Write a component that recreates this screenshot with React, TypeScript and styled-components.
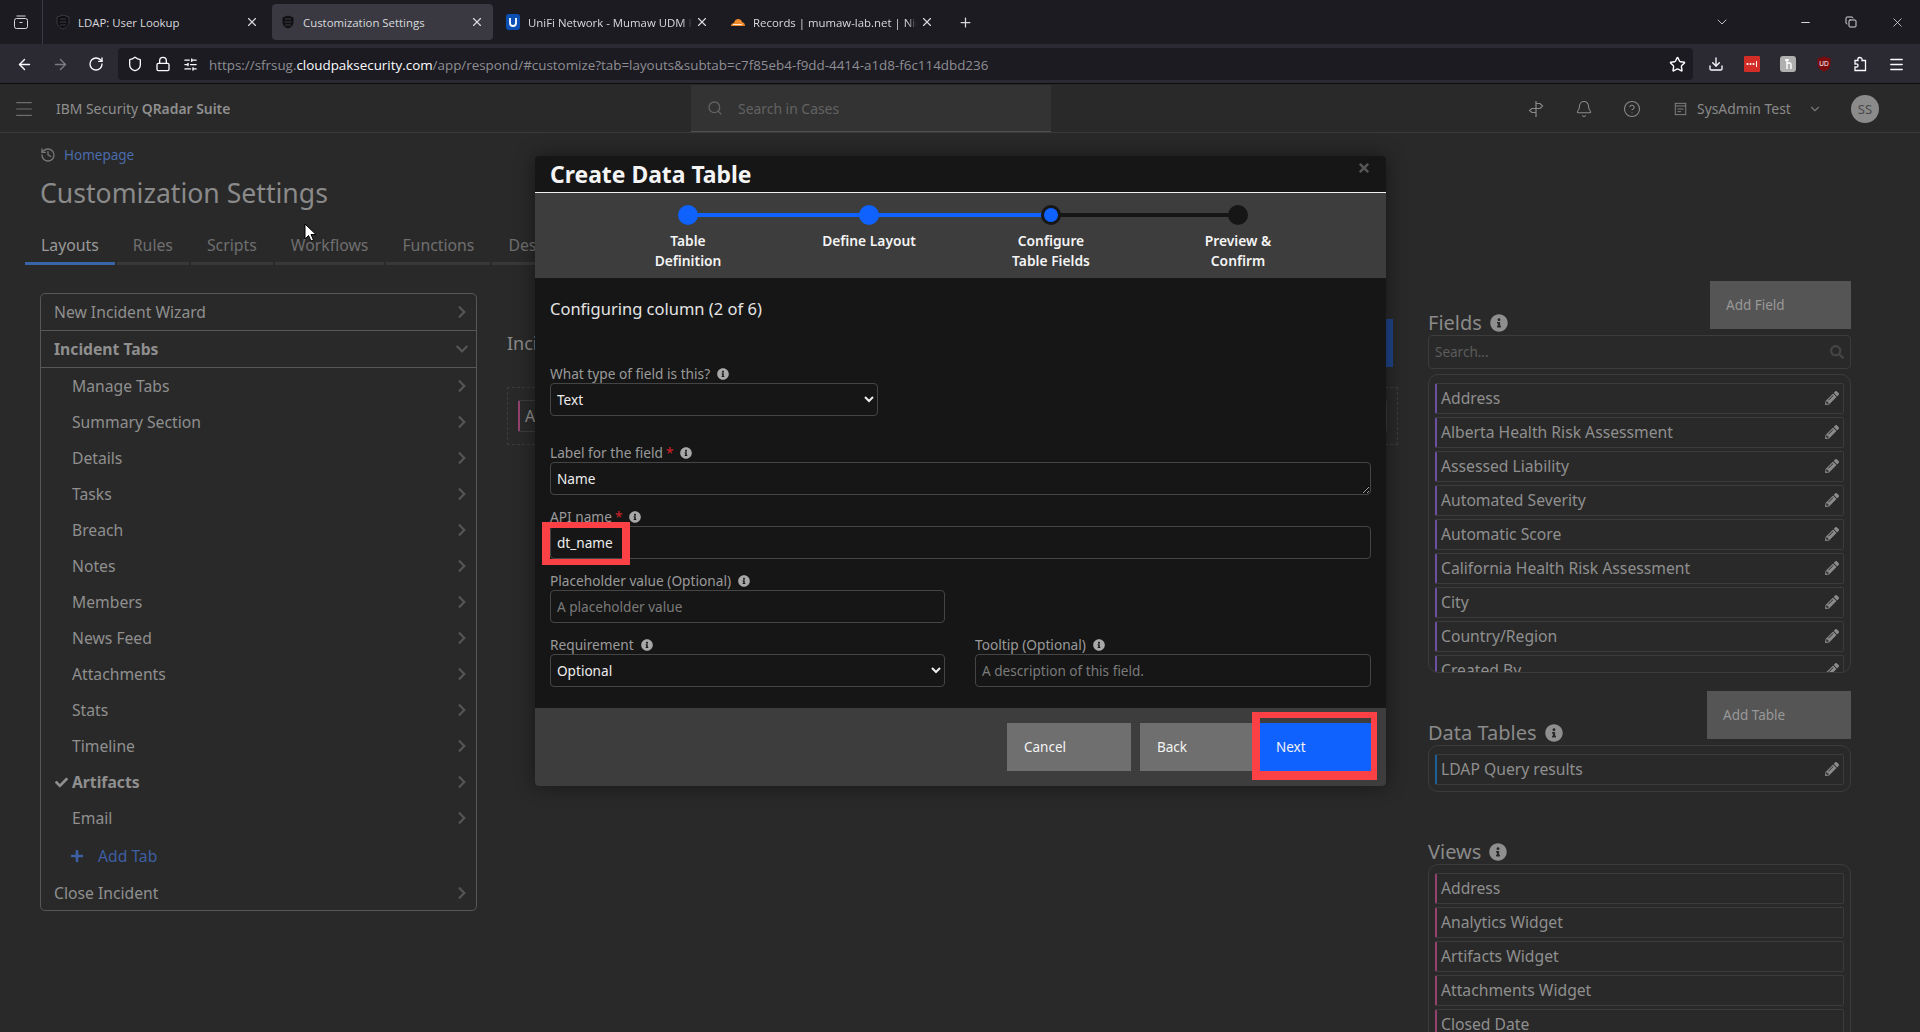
import React from "react";
import styled, { createGlobalStyle } from "styled-components";
import {
  ArrowLeft,
  ArrowRight,
  Bell,
  ChevronDown,
  CircleHelp,
  Copy,
  Download,
  History,
  Lock,
  Menu,
  Minus,
  Plus,
  RotateCw,
  Search,
  Shield,
  SlidersHorizontal,
  Star,
  X,
} from "lucide-react";
import {
  FaCheck,
  FaChevronDown,
  FaChevronRight,
  FaInfoCircle,
  FaPencilAlt,
  FaPlus,
  FaSearch,
  FaTimes,
} from "react-icons/fa";

const GlobalStyle = createGlobalStyle`
  html, body {
    margin: 0;
    height: 1032px;
    overflow: hidden;
    background: #292929;
  }
  * {
    box-sizing: border-box;
  }
`;

const APP_FONT = `"Noto Sans", "Open Sans", sans-serif`;
const CHROME_FONT = `"Open Sans", "Noto Sans", sans-serif`;

/* browser chrome */
const Browser = styled.div`
  width: 1920px;
  height: 1032px;
  position: relative;
  overflow: hidden;
  font-family: ${APP_FONT};
`;

const TabStrip = styled.div`
  height: 44px;
  background: #1c1b22;
  display: flex;
  align-items: center;
  color: #fbfbfe;
  font-family: ${CHROME_FONT};
  font-size: 11.4px;
`;

const TabsButton = styled.div`
  width: 43px;
  height: 44px;
  display: flex;
  align-items: center;
  justify-content: center;
  border-right: 1px solid #3a3a42;
  color: #d8d8dc;
`;

const BrowserTab = styled.div<{ $active?: boolean }>`
  width: 221px;
  height: 36px;
  margin-left: 4px;
  padding: 0 9px 0 6px;
  border-radius: 4px;
  display: flex;
  align-items: center;
  gap: 7px;
  background: ${(p) => (p.$active ? "#3a3942" : "transparent")};
  color: #d9d9dd;
`;

const TabTitle = styled.span<{ $fade?: boolean }>`
  flex: 1;
  margin-right: -4px;
  overflow: hidden;
  white-space: nowrap;
  ${(p) =>
    p.$fade &&
    `mask-image: linear-gradient(to right, #000 94%, transparent 100%);`}
`;

const Favicon = styled.span`
  width: 16px;
  height: 16px;
  margin-left: 2px;
  flex: none;
  display: flex;
`;

const StripSpacer = styled.div`
  flex: 1;
`;

const StripIcon = styled.div<{ $width: number }>`
  width: ${(p) => p.$width}px;
  display: flex;
  justify-content: center;
  color: #d8d8dc;
`;

const Toolbar = styled.div`
  height: 40px;
  padding-top: 1px;
  background: #2b2a33;
  border-bottom: 1px solid #0c0c0d;
  display: flex;
  align-items: center;
  color: #fbfbfe;
`;

const NavButton = styled.div<{ $dim?: boolean }>`
  width: 36px;
  display: flex;
  justify-content: center;
  color: ${(p) => (p.$dim ? "#7a7a80" : "#fbfbfe")};
`;

const NavGroup = styled.div`
  width: 118px;
  padding-left: 6px;
  display: flex;
`;

const UrlBar = styled.div`
  width: 1575px;
  height: 32px;
  background: #1c1b22;
  border-radius: 4px;
  display: flex;
  align-items: center;
  padding: 0 7px 0 9px;
  gap: 12px;
`;

const UrlText = styled.div`
  margin-left: -1px;
  padding-top: 1px;
  flex: 1;
  font-family: ${CHROME_FONT};
  font-size: 13.4px;
  white-space: nowrap;
  color: #8e8e93;
  strong {
    font-weight: 400;
    color: #fbfbfe;
  }
`;

const ToolGroup = styled.div`
  flex: 1;
  display: flex;
  padding-left: 5px;
`;

const ToolIcon = styled.div`
  width: 36px;
  display: flex;
  justify-content: center;
`;

/* app header */
const AppHeader = styled.header`
  height: 49px;
  padding-top: 1px;
  background: #292929;
  border-bottom: 1px solid #3a3a3a;
  display: flex;
  align-items: center;
  color: #8f8f8f;
  font-size: 13.9px;
`;

const Hamburger = styled.div`
  width: 56px;
  padding-left: 13px;
  display: flex;
  color: #6e6e6e;
`;

const Brand = styled.div`
  width: 635px;
  strong {
    font-weight: 600;
  }
`;

const SearchCases = styled.div`
  width: 360px;
  height: 47px;
  background: #333333;
  border-bottom: 1px solid #505050;
  display: flex;
  align-items: center;
  gap: 15px;
  padding-left: 16px;
  color: #626262;
`;

const HeaderIcons = styled.div`
  flex: 1;
  display: flex;
  align-items: center;
  padding-left: 461px;
  color: #8a8a8a;
`;

const HeaderIcon = styled.div`
  width: 48px;
  display: flex;
  justify-content: center;
`;

const UserName = styled.div`
  width: 130px;
  margin-left: 18px;
  display: flex;
  align-items: center;
  gap: 10px;
  white-space: nowrap;
`;

const UserCaret = styled.div`
  width: 47px;
  padding-left: 4px;
  display: flex;
  color: #777;
`;

const Avatar = styled.div`
  width: 28px;
  height: 28px;
  border-radius: 50%;
  background: #8b8b8b;
  color: #4a4a4a;
  display: flex;
  align-items: center;
  justify-content: center;
  font-size: 13px;
`;

/* page head */
const PageHead = styled.div`
  padding: 12px 0 0 40px;
`;

const Breadcrumb = styled.div`
  display: flex;
  align-items: center;
  gap: 8px;
  height: 20px;
  font-size: 13.5px;
  color: #4a6cab;
  svg {
    color: #777;
  }
`;

const Title = styled.h1`
  margin: 9px 0 0;
  font-size: 26.6px;
  line-height: 38px;
  font-weight: 400;
  color: #8a8a8a;
`;

const PageTabs = styled.div`
  display: flex;
  gap: 2px;
  margin: 23px 0 0 -15px;
`;

const PageTab = styled.div<{ $active?: boolean }>`
  padding: 0 16px;
  height: 30px;
  font-size: 15.8px;
  line-height: 20px;
  color: ${(p) => (p.$active ? "#9a9a9a" : "#6f6f6f")};
  border-bottom: 3px solid ${(p) => (p.$active ? "#3a64a8" : "#383838")};
`;

const Columns = styled.div`
  display: grid;
  grid-template-columns: 437px 891px 423px;
  column-gap: 30px;
  padding: 16px 0 0 40px;
`;

/* left panel */
const SidePanel = styled.div`
  margin-top: 12px;
  height: 618px;
  border: 1px solid #575757;
  border-radius: 5px;
  color: #8f8f8f;
  font-size: 15.7px;
`;

const SideRow = styled.div<{ $top?: boolean; $bold?: boolean; $line?: boolean }>`
  height: ${(p) => (p.$top && p.$line ? "37px" : "36px")};
  padding: 0 7px 1px ${(p) => (p.$top ? "13px" : "31px")};
  display: flex;
  align-items: center;
  justify-content: space-between;
  position: relative;
  font-weight: ${(p) => (p.$bold ? 700 : 400)};
  border-bottom: ${(p) => (p.$line ? "1px solid #575757" : "none")};
  > svg:last-child {
    color: #555;
  }
`;

const DoneCheck = styled(FaCheck)`
  position: absolute;
  left: 14px;
  top: 12px;
  color: #8f8f8f;
`;

const AddTabRow = styled.div`
  height: 39px;
  padding-left: 29px;
  display: flex;
  align-items: center;
  gap: 14px;
  color: #3d5fa3;
`;

/* middle */
const MiddleHead = styled.div`
  margin-top: 38px;
  height: 48px;
  display: flex;
  align-items: center;
  justify-content: space-between;
  font-size: 18px;
  color: #8a8a8a;
`;

const BlueButton = styled.div`
  width: 120px;
  height: 48px;
  margin-right: 5px;
  background: #1f4488;
`;

const DropZone = styled.div`
  margin-top: 20px;
  height: 58px;
  border: 1px dashed #3c3c3c;
  padding: 12px 10px;
`;

const ZoneField = styled.div`
  height: 32px;
  padding-left: 5px;
  border: 1px solid #3c3c3c;
  border-left: 2px solid #94426e;
  border-radius: 2px;
  color: #8f8f8f;
  font-size: 15.8px;
  line-height: 30px;
`;

/* right panel */
const SectionHead = styled.div`
  height: 54px;
  display: flex;
  align-items: flex-start;
  justify-content: space-between;
`;

const SectionTitle = styled.h3`
  align-self: flex-end;
  margin: 0;
  height: 24px;
  padding-bottom: 1px;
  display: flex;
  align-items: center;
  gap: 8px;
  font-size: 20px;
  font-weight: 400;
  color: #8a8a8a;
  svg {
    color: #8f8f8f;
  }
`;

const AddButton = styled.div<{ $width: number }>`
  width: ${(p) => p.$width}px;
  height: 48px;
  padding-left: 16px;
  background: #555555;
  color: #999;
  font-size: 13.5px;
  line-height: 48px;
`;

const FieldSearch = styled.div`
  height: 34px;
  padding: 0 6px;
  margin-bottom: 5px;
  border: 1px solid #3c3c3c;
  border-radius: 4px;
  display: flex;
  align-items: center;
  justify-content: space-between;
  font-size: 13.5px;
  color: #5c5c5c;
  svg {
    color: #444;
  }
`;

const ListBox = styled.div<{ $height?: number; $gapAfter?: number }>`
  ${(p) => (p.$height ? `height: ${p.$height}px; overflow: hidden;` : "")}
  margin-bottom: ${(p) => p.$gapAfter ?? 0}px;
  padding: 8px 6px 6px;
  border: 1px solid #3c3c3c;
  border-radius: 10px;
  display: flex;
  flex-direction: column;
  gap: 3px;
`;

const ListItem = styled.div<{ $accent: string }>`
  height: 31px;
  flex: none;
  padding: 0 4px 1px 4px;
  border: 1px solid #3c3c3c;
  border-left: 2px solid ${(p) => p.$accent};
  border-radius: 2px;
  display: flex;
  align-items: center;
  justify-content: space-between;
  font-size: 15.7px;
  color: #8f8f8f;
  svg {
    color: #8a8a8a;
  }
`;

/* modal */
const Modal = styled.div`
  position: absolute;
  left: 535px;
  top: 156px;
  width: 851px;
  height: 630px;
  background: #161616;
  border-radius: 4px;
  box-shadow: 0 0 20px rgba(0, 0, 0, 0.45);
  overflow: hidden;
  display: flex;
  flex-direction: column;
`;

const ModalHead = styled.div`
  height: 37px;
  flex: none;
  padding-left: 15px;
  position: relative;
  border-bottom: 1px solid #f2f2f2;
  font-size: 22.9px;
  font-weight: 700;
  line-height: 37px;
  color: #f4f4f4;
`;

const CloseModal = styled(FaTimes)`
  position: absolute;
  right: 15px;
  top: 5px;
  color: #555;
`;

const Stepper = styled.div`
  height: 85px;
  flex: none;
  padding: 12px 0 0 63px;
  background: #3d3d3d;
  display: flex;
`;

const Step = styled.div<{ $width: number; $line?: number; $done?: boolean }>`
  width: ${(p) => p.$width}px;
  position: relative;
  display: flex;
  flex-direction: column;
  align-items: center;
  &::after {
    content: "";
    display: ${(p) => (p.$line ? "block" : "none")};
    position: absolute;
    left: 50%;
    top: 8px;
    width: ${(p) => p.$line}px;
    height: 4px;
    background: ${(p) => (p.$done ? "#0f62fe" : "#161616")};
  }
`;

const StepDot = styled.div<{ $state: "done" | "current" | "todo" }>`
  width: 20px;
  height: 20px;
  border-radius: 50%;
  position: relative;
  z-index: 1;
  background: ${(p) => (p.$state === "todo" ? "#161616" : "#0f62fe")};
  border: ${(p) => (p.$state === "current" ? "3px solid #161616" : "none")};
`;

const StepLabel = styled.div`
  margin-top: 6px;
  text-align: center;
  font-size: 13.8px;
  font-weight: 600;
  line-height: 20px;
  color: #f4f4f4;
  white-space: pre-line;
`;

const ModalBody = styled.div`
  flex: 1;
  padding: 0 15px;
`;

const ColumnHeading = styled.div`
  height: 86px;
  padding-top: 19px;
  font-size: 16.5px;
  line-height: 24px;
  color: #e4e4e4;
`;

const FieldRow = styled.div<{ $after?: number }>`
  display: flex;
  gap: 30px;
  margin-bottom: ${(p) => p.$after ?? 12}px;
`;

const Field = styled.div<{ $width: number }>`
  width: ${(p) => p.$width}px;
  position: relative;
`;

const FieldLabel = styled.label`
  height: 19px;
  display: flex;
  align-items: center;
  gap: 3px;
  font-size: 13.7px;
  color: #9a9a9a;
  svg {
    margin-left: 4px;
    color: #a8a8a8;
  }
`;

const Required = styled.span`
  color: #d5202a;
`;

const controlStyles = `
  display: block;
  width: 100%;
  height: 33px;
  padding: 0 6px;
  color-scheme: dark;
  background: #161616;
  border: 1px solid #454545;
  border-radius: 4px;
  color: #eeeeee;
  font-family: ${APP_FONT};
  font-size: 13.6px;
  outline: none;
  &::placeholder {
    color: #7a7a7a;
    opacity: 1;
  }
`;

const TextInput = styled.input`
  ${controlStyles}
`;

const TextArea = styled.textarea`
  ${controlStyles}
  line-height: 32px;
  padding-top: 0;
  overflow: hidden;
`;

const Select = styled.select`
  ${controlStyles}
  padding: 0 2px;
`;

const RedBox = styled.div<{ $borders: string }>`
  position: absolute;
  border-style: solid;
  border-color: #fb4146;
  border-width: ${(p) => p.$borders};
  pointer-events: none;
  z-index: 2;
`;

const NameHighlight = styled(RedBox)`
  left: -8px;
  top: 15px;
  width: 88px;
  height: 43px;
`;

const ModalFoot = styled.div`
  height: 78px;
  flex: none;
  padding: 15px 15px 0 0;
  background: #3d3d3d;
  display: flex;
  justify-content: flex-end;
  gap: 9px;
`;

const FootButton = styled.div<{ $width: number; $primary?: boolean; $flush?: boolean }>`
  width: ${(p) => p.$width}px;
  height: 48px;
  margin-right: ${(p) => (p.$flush ? "-9px" : "0")};
  padding-left: ${(p) => (p.$primary ? "16px" : "17px")};
  position: relative;
  background: ${(p) => (p.$primary ? "#0f62fe" : "#6f6f6f")};
  color: #f4f4f4;
  font-size: 13.5px;
  line-height: 48px;
`;

const NextHighlight = styled(RedBox)`
  left: -8px;
  top: -11px;
  right: -6px;
  bottom: -9px;
`;

const MousePointer = styled.svg`
  position: absolute;
  left: 304px;
  top: 223px;
`;

const LdapShield = () => (
  <svg viewBox="0 0 16 16" width="16" height="16">
    <path
      d="M8 1 L14 3 V8 C14 11.5 11 14 8 15 C5 14 2 11.5 2 8 V3 Z"
      fill="#101014"
      stroke="#3a3a40"
      strokeWidth="1"
    />
    <path d="M5 5h6M4.5 8h7M5 11h6" stroke="#3a3a40" strokeWidth="1" />
  </svg>
);

const UnifiIcon = () => (
  <svg viewBox="0 0 16 16" width="16" height="16">
    <rect x="1" y="0" width="14" height="16" rx="3" fill="#0b4fb3" />
    <path
      d="M5 4v5c0 2 1.3 3 3 3s3-1 3-3V4"
      fill="none"
      stroke="#fff"
      strokeWidth="1.8"
    />
  </svg>
);

const CloudIcon = () => (
  <svg viewBox="0 0 16 16" width="16" height="16">
    <path
      d="M1 12c0-2 1.400-3 3-3 .6-2.500 2.300-4 4.300-4 2 0 3.500 1.300 4 3.200 1.400 0 2.700 1.400 2.700 3.800z"
      fill="#ef8a2c"
    />
    <path d="M3 10.500h9" stroke="#fff" strokeWidth=".8" />
  </svg>
);

const DocIcon = () => (
  <svg viewBox="0 0 14 16" width="13" height="14" fill="none" stroke="currentColor">
    <rect x="1" y="1.500" width="12" height="13" />
    <path d="M1 4.500h12M3.500 8h7M3.500 11h4" />
  </svg>
);

const SignpostIcon = () => (
  <svg viewBox="0 0 18 18" width="18" height="18" fill="none" stroke="currentColor" strokeWidth="1.200">
    <path d="M9 1v16M9 3.500h4l2.500 2.500L13 8.500H9M9 8.500H5L2.500 10.500 5 12.500h4" />
  </svg>
);

const PuzzleIcon = () => (
  <svg viewBox="0 0 16 16" width="16" height="16" fill="none" stroke="currentColor" strokeWidth="1.300">
    <path d="M7.500 1.500C6 1.500 5.500 2.800 6 4.500H3V8C5 7.500 6 8.300 6 9.500 6 10.800 5 11.500 3 11V14.500H13.500V4.500H10C10.500 2.800 9.500 1.500 7.500 1.500Z" />
  </svg>
);

const PasswordExt = () => (
  <svg viewBox="0 0 16 16" width="16" height="16">
    <rect width="16" height="16" rx="1" fill="#d32d27" />
    <circle cx="3.500" cy="8" r="1.100" fill="#fff" />
    <circle cx="6.500" cy="8" r="1.100" fill="#fff" />
    <circle cx="9.500" cy="8" r="1.100" fill="#fff" />
    <path d="M12.500 5v6" stroke="#fff" strokeWidth="1" />
  </svg>
);

const GrayExt = () => (
  <svg viewBox="0 0 16 16" width="16" height="16">
    <rect width="16" height="16" rx="3" fill="#b0b0b0" />
    <path
      d="M5 4h4M7 3v10M7 7h3c1 0 1 1 1 2v4"
      stroke="#fff"
      strokeWidth="1.400"
      fill="none"
    />
  </svg>
);

const UblockExt = () => (
  <svg viewBox="0 0 16 16" width="16" height="16">
    <path
      d="M8 0.500 L14.500 2.500 V8 C14.500 12 11 14.500 8 15.500 C5 14.500 1.500 12 1.500 8 V2.500 Z"
      fill="#7a0c0f"
    />
    <text x="8" y="10" textAnchor="middle" fontSize="6.500" fill="#fff" fontFamily="Liberation Sans">
      UD
    </text>
  </svg>
);

const sideTabs = [
  "Manage Tabs",
  "Summary Section",
  "Details",
  "Tasks",
  "Breach",
  "Notes",
  "Members",
  "News Feed",
  "Attachments",
  "Stats",
  "Timeline",
  "Artifacts",
  "Email",
];

const fields = [
  "Address",
  "Alberta Health Risk Assessment",
  "Assessed Liability",
  "Automated Severity",
  "Automatic Score",
  "California Health Risk Assessment",
  "City",
  "Country/Region",
  "Created By",
];

const views = [
  "Address",
  "Analytics Widget",
  "Artifacts Widget",
  "Attachments Widget",
  "Closed Date",
];

const pageTabs = ["Layouts", "Rules", "Scripts", "Workflows", "Functions", "Destinations"];

const App = () => {
  return (
    <Browser>
      <GlobalStyle />
      <TabStrip>
        <TabsButton>
          <svg viewBox="0 0 16 16" width="16" height="16" fill="none" stroke="currentColor">
            <rect x="1.500" y="4.500" width="13" height="10" rx="2" />
            <path d="M3.500 2h9M6.500 8.500h3" />
          </svg>
        </TabsButton>
        <BrowserTab>
          <Favicon>
            <LdapShield />
          </Favicon>
          <TabTitle>LDAP: User Lookup</TabTitle>
          <X size={14} />
        </BrowserTab>
        <BrowserTab $active>
          <Favicon>
            <LdapShield />
          </Favicon>
          <TabTitle>Customization Settings</TabTitle>
          <X size={14} />
        </BrowserTab>
        <BrowserTab>
          <Favicon>
            <UnifiIcon />
          </Favicon>
          <TabTitle $fade>UniFi Network - Mumaw UDM Pro</TabTitle>
          <X size={14} />
        </BrowserTab>
        <BrowserTab>
          <Favicon>
            <CloudIcon />
          </Favicon>
          <TabTitle $fade>Records | mumaw-lab.net | Nick Mumaw</TabTitle>
          <X size={14} />
        </BrowserTab>
        <StripIcon $width={44}>
          <Plus size={15} />
        </StripIcon>
        <StripSpacer />
        <StripIcon $width={46}>
          <ChevronDown size={16} strokeWidth={1.3} />
        </StripIcon>
        <StripIcon $width={37} />
        <StripIcon $width={46}>
          <Minus size={13} />
        </StripIcon>
        <StripIcon $width={46}>
          <Copy size={12} />
        </StripIcon>
        <StripIcon $width={46}>
          <X size={15} strokeWidth={1.3} />
        </StripIcon>
      </TabStrip>

      <Toolbar>
        <NavGroup>
          <NavButton>
            <ArrowLeft size={17} />
          </NavButton>
          <NavButton $dim>
            <ArrowRight size={17} />
          </NavButton>
          <NavButton>
            <RotateCw size={16} />
          </NavButton>
        </NavGroup>
        <UrlBar>
          <Shield size={16} />
          <Lock size={16} />
          <SlidersHorizontal size={15} />
          <UrlText>
            https://sfrsug.<strong>cloudpaksecurity.com</strong>
            /app/respond/#customize?tab=layouts&amp;subtab=c7f85eb4-f9dd-4414-a1d8-f6c114dbd236
          </UrlText>
          <Star size={17} />
        </UrlBar>
        <ToolGroup>
          <ToolIcon>
            <Download size={16} />
          </ToolIcon>
          <ToolIcon>
            <PasswordExt />
          </ToolIcon>
          <ToolIcon>
            <GrayExt />
          </ToolIcon>
          <ToolIcon>
            <UblockExt />
          </ToolIcon>
          <ToolIcon>
            <PuzzleIcon />
          </ToolIcon>
          <ToolIcon>
            <Menu size={17} />
          </ToolIcon>
        </ToolGroup>
      </Toolbar>

      <AppHeader>
        <Hamburger>
          <Menu size={22} strokeWidth={1.3} />
        </Hamburger>
        <Brand>
          IBM Security <strong>QRadar Suite</strong>
        </Brand>
        <SearchCases>
          <Search size={16} />
          Search in Cases
        </SearchCases>
        <HeaderIcons>
          <HeaderIcon>
            <SignpostIcon />
          </HeaderIcon>
          <HeaderIcon>
            <Bell size={18} strokeWidth={1.4} />
          </HeaderIcon>
          <HeaderIcon>
            <CircleHelp size={18} strokeWidth={1.4} />
          </HeaderIcon>
          <UserName>
            <DocIcon />
            SysAdmin Test
          </UserName>
          <UserCaret>
            <ChevronDown size={14} />
          </UserCaret>
          <Avatar>SS</Avatar>
        </HeaderIcons>
      </AppHeader>

      <PageHead>
        <Breadcrumb>
          <History size={16} />
          Homepage
        </Breadcrumb>
        <Title>Customization Settings</Title>
        <PageTabs>
          {pageTabs.map((name, i) => (
            <PageTab key={name} $active={i === 0}>
              {name}
            </PageTab>
          ))}
        </PageTabs>
      </PageHead>

      <Columns>
        <SidePanel>
          <SideRow $top $line>
            New Incident Wizard
            <FaChevronRight size={14} />
          </SideRow>
          <SideRow $top $bold $line>
            Incident Tabs
            <FaChevronDown size={14} />
          </SideRow>
          {sideTabs.map((name) => (
            <SideRow key={name} $bold={name === "Artifacts"}>
              {name === "Artifacts" && <DoneCheck size={13} />}
              {name}
              <FaChevronRight size={14} />
            </SideRow>
          ))}
          <AddTabRow>
            <FaPlus size={14} />
            Add Tab
          </AddTabRow>
          <SideRow $top>
            Close Incident
            <FaChevronRight size={14} />
          </SideRow>
        </SidePanel>

        <div>
          <MiddleHead>
            Incident Tab: Artifacts
            <BlueButton />
          </MiddleHead>
          <DropZone>
            <ZoneField>Artifacts</ZoneField>
          </DropZone>
        </div>

        <div>
          <SectionHead>
            <SectionTitle>
              Fields <FaInfoCircle size={18} />
            </SectionTitle>
            <AddButton $width={141}>Add Field</AddButton>
          </SectionHead>
          <FieldSearch>
            Search...
            <FaSearch size={14} />
          </FieldSearch>
          <ListBox $height={299} $gapAfter={18}>
            {fields.map((name) => (
              <ListItem key={name} $accent="#6b4fa0">
                {name}
                <FaPencilAlt size={14} />
              </ListItem>
            ))}
          </ListBox>

          <SectionHead>
            <SectionTitle>
              Data Tables <FaInfoCircle size={18} />
            </SectionTitle>
            <AddButton $width={144}>Add Table</AddButton>
          </SectionHead>
          <ListBox $gapAfter={48}>
            <ListItem $accent="#1f5f99">
              LDAP Query results
              <FaPencilAlt size={14} />
            </ListItem>
          </ListBox>

          <SectionTitle>
            Views <FaInfoCircle size={18} />
          </SectionTitle>
          <ListBox>
            {views.map((name) => (
              <ListItem key={name} $accent="#94426e">
                {name}
              </ListItem>
            ))}
          </ListBox>
        </div>
      </Columns>

      <Modal>
        <ModalHead>
          Create Data Table
          <CloseModal size={14} />
        </ModalHead>
        <Stepper>
          <Step $width={180} $line={181} $done>
            <StepDot $state="done" />
            <StepLabel>{"Table\nDefinition"}</StepLabel>
          </Step>
          <Step $width={182} $line={182} $done>
            <StepDot $state="done" />
            <StepLabel>Define Layout</StepLabel>
          </Step>
          <Step $width={182} $line={187}>
            <StepDot $state="current" />
            <StepLabel>{"Configure\nTable Fields"}</StepLabel>
          </Step>
          <Step $width={192}>
            <StepDot $state="todo" />
            <StepLabel>{"Preview &\nConfirm"}</StepLabel>
          </Step>
        </Stepper>
        <ModalBody>
          <ColumnHeading>Configuring column (2 of 6)</ColumnHeading>
          <FieldRow $after={27}>
            <Field $width={328}>
              <FieldLabel>
                What type of field is this? <FaInfoCircle size={12} />
              </FieldLabel>
              <Select defaultValue="Text">
                <option>Text</option>
              </Select>
            </Field>
          </FieldRow>
          <FieldRow>
            <Field $width={821}>
              <FieldLabel>
                Label for the field <Required>*</Required> <FaInfoCircle size={12} />
              </FieldLabel>
              <TextArea readOnly value="Name" />
            </Field>
          </FieldRow>
          <FieldRow>
            <Field $width={821}>
              <FieldLabel>
                API name <Required>*</Required> <FaInfoCircle size={12} />
              </FieldLabel>
              <TextInput readOnly value="dt_name" />
              <NameHighlight $borders="6px 8px" />
            </Field>
          </FieldRow>
          <FieldRow>
            <Field $width={395}>
              <FieldLabel>
                Placeholder value (Optional) <FaInfoCircle size={12} />
              </FieldLabel>
              <TextInput readOnly placeholder="A placeholder value" />
            </Field>
          </FieldRow>
          <FieldRow>
            <Field $width={395}>
              <FieldLabel>
                Requirement <FaInfoCircle size={12} />
              </FieldLabel>
              <Select defaultValue="Optional">
                <option>Optional</option>
              </Select>
            </Field>
            <Field $width={396}>
              <FieldLabel>
                Tooltip (Optional) <FaInfoCircle size={12} />
              </FieldLabel>
              <TextInput readOnly placeholder="A description of this field." />
            </Field>
          </FieldRow>
        </ModalBody>
        <ModalFoot>
          <FootButton $width={124}>Cancel</FootButton>
          <FootButton $width={120} $flush>
            Back
          </FootButton>
          <FootButton $width={111} $primary>
            Next
            <NextHighlight $borders="6px 6px 9px 8px" />
          </FootButton>
        </ModalFoot>
      </Modal>

      <MousePointer width="13" height="20" viewBox="0 0 13 20">
        <path d="M1 1 V16 L4.500 12.500 L7 18 L9.500 17 L7 11.500 H12 Z" fill="#fff" stroke="#000" strokeWidth="1" />
      </MousePointer>
    </Browser>
  );
};

export default App;
